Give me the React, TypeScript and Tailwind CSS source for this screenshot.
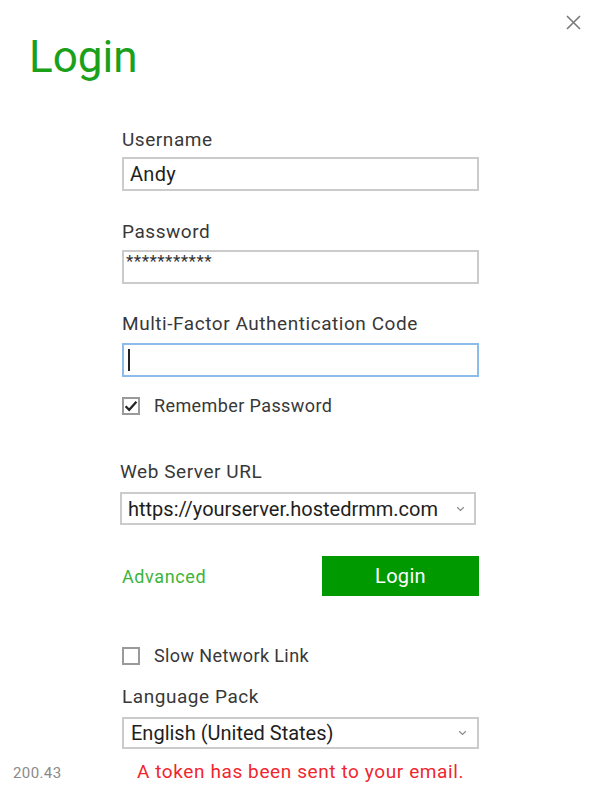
import React from "react";

const Chevron = () => (
  <svg width="9" height="6" viewBox="0 0 9 6" className="shrink-0">
    <path d="M1.2 1.2 L4.5 4.4 L7.8 1.2" fill="none" stroke="#8a8a8a" strokeWidth="1.2" />
  </svg>
);

const Check = () => (
  <svg width="14" height="12" viewBox="0 0 14 12">
    <path d="M1.6 6.2 L5.2 9.8 L12.4 1.8" fill="none" stroke="#222" strokeWidth="2.2" />
  </svg>
);

export default function App() {
  return (
    <div
      className="relative w-[598px] h-[794px] bg-white overflow-hidden"
      style={{ fontFamily: "Roboto, 'Liberation Sans', sans-serif" }}
    >
      <button className="absolute right-[17px] top-[14px] w-[16px] h-[16px] flex items-center justify-center">
        <svg width="15" height="15" viewBox="0 0 15 15">
          <path d="M1 1 L14 14 M14 1 L1 14" stroke="#7a7a7a" strokeWidth="1.6" />
        </svg>
      </button>

      <div className="pt-[35px] pl-[29px] text-[44px] leading-[44px] text-[#1aa01a]">Login</div>

      <div className="ml-[122px] w-[357px] flex flex-col">
        <div className="mt-[49px] h-[24px] text-[19px] leading-[24px] tracking-[0.55px] text-[#383838]">
          Username
        </div>
        <div className="mt-[5px] h-[34px] border-2 border-[#cbcbcb] flex items-center pl-[6px] text-[20px] text-[#1e1e1e] tracking-[0.3px]">
          Andy
        </div>

        <div className="mt-[29px] h-[24px] text-[19px] leading-[24px] tracking-[0.55px] text-[#383838]">
          Password
        </div>
        <div className="mt-[6px] h-[34px] border-2 border-[#cbcbcb] pl-[2px] pt-[3px] text-[17px] leading-[12px] text-[#333] tracking-[0.5px]">
          ***********
        </div>

        <div className="mt-[28px] h-[24px] text-[19px] leading-[24px] tracking-[0.55px] text-[#383838]">
          Multi-Factor Authentication Code
        </div>
        <div className="mt-[7px] h-[34px] border-2 border-[#8cbcec] flex items-center pl-[4px]">
          <div className="w-[1.5px] h-[22px] bg-[#222]" />
        </div>

        <div className="mt-[20px] h-[18px] flex items-center">
          <div className="w-[18px] h-[18px] border-2 border-[#9a9a9a] flex items-center justify-center">
            <Check />
          </div>
          <span className="ml-[14px] text-[18px] leading-[18px] tracking-[0.4px] text-[#383838]">
            Remember Password
          </span>
        </div>

        <div className="mt-[45px] -ml-[2px] h-[24px] text-[19px] leading-[24px] tracking-[0.55px] text-[#383838]">
          Web Server URL
        </div>
        <div className="mt-[8px] -ml-[2px] w-[356px] h-[33px] border-2 border-[#cbcbcb] flex items-center pl-[6px] pr-[9px] text-[20px] text-[#1e1e1e]">
          <span className="flex-1">https://yourserver.hostedrmm.com</span>
          <Chevron />
        </div>

        <div className="mt-[31px] h-[40px] flex items-center justify-between">
          <span className="text-[18px] tracking-[0.6px] text-[#3cb43c]">Advanced</span>
          <button className="w-[157px] h-[40px] bg-[#009a00] text-white text-[20px] tracking-[0.3px] flex items-center justify-center">
            Login
          </button>
        </div>

        <div className="mt-[51px] h-[18px] flex items-center">
          <div className="w-[18px] h-[18px] border-2 border-[#9a9a9a]" />
          <span className="ml-[14px] text-[18px] leading-[18px] tracking-[0.4px] text-[#383838]">
            Slow Network Link
          </span>
        </div>

        <div className="mt-[20px] h-[24px] text-[19px] leading-[24px] tracking-[0.55px] text-[#383838]">
          Language Pack
        </div>
        <div className="mt-[8px] h-[32px] border-2 border-[#cbcbcb] flex items-center pl-[7px] pr-[10px] text-[20px] text-[#1e1e1e]">
          <span className="flex-1">English (United States)</span>
          <Chevron />
        </div>
      </div>

      <div className="mt-[11px] flex items-baseline">
        <div className="w-[122px] pl-[13px] text-[15px] tracking-[0.4px] text-[#8a8a8a]">200.43</div>
        <div className="w-[357px] text-center text-[19px] leading-[24px] tracking-[0.6px] text-[#f0262e]">
          A token has been sent to your email.
        </div>
      </div>
    </div>
  );
}
